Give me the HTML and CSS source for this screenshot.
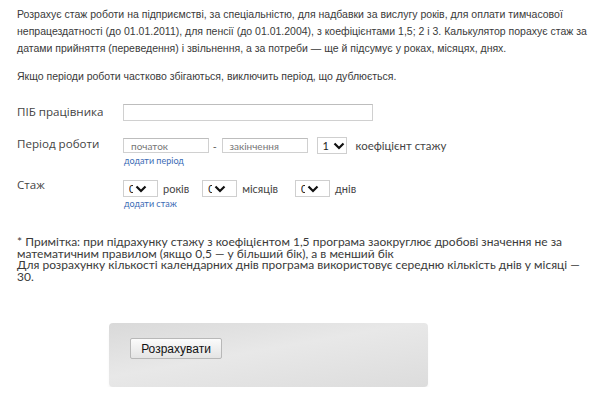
FILE: index.html
```html
<!DOCTYPE html>
<html lang="uk">
<head>
<meta charset="utf-8">
<link rel="stylesheet" href="styles.css">
</head>
<body>
<div class="page">
  <p class="intro">Розрахує стаж роботи на підприємстві, за спеціальністю, для надбавки за вислугу років, для оплати тимчасової непрацездатності (до 01.01.2011), для пенсії (до 01.01.2004), з коефіцієнтами 1,5; 2 і 3. Калькулятор порахує стаж за датами прийняття (переведення) і звільнення, а за потреби — ще й підсумує у роках, місяцях, днях.</p>
  <p class="intro second">Якщо періоди роботи частково збігаються, виключить період, що дублюється.</p>

  <div class="form">
    <div class="row row-name">
      <div class="label">ПІБ працівника</div>
      <div class="field"><div class="input wide"></div></div>
    </div>
    <div class="row row-period">
      <div class="label">Період роботи</div>
      <div class="field">
        <div class="line">
          <div class="input date">початок</div>
          <span class="dash">-</span>
          <div class="input date">закінчення</div>
          <div class="select coef"><span class="val">1</span><svg class="chev" viewBox="0 0 12 8" width="12" height="8"><path d="M1.5 1.5 L6 6 L10.5 1.5" fill="none" stroke="#111" stroke-width="2.2"/></svg></div>
          <span class="unit coef-unit">коефіцієнт стажу</span>
        </div>
        <a class="add">додати період</a>
      </div>
    </div>
    <div class="row row-stazh">
      <div class="label">Стаж</div>
      <div class="field">
        <div class="line">
          <div class="select num"><span class="val clip">0</span><svg class="chev" viewBox="0 0 12 8" width="12" height="8"><path d="M1.5 1.5 L6 6 L10.5 1.5" fill="none" stroke="#111" stroke-width="2.2"/></svg></div>
          <span class="unit u1">років</span>
          <div class="select num"><span class="val clip">0</span><svg class="chev" viewBox="0 0 12 8" width="12" height="8"><path d="M1.5 1.5 L6 6 L10.5 1.5" fill="none" stroke="#111" stroke-width="2.2"/></svg></div>
          <span class="unit u2">місяців</span>
          <div class="select num"><span class="val clip">0</span><svg class="chev" viewBox="0 0 12 8" width="12" height="8"><path d="M1.5 1.5 L6 6 L10.5 1.5" fill="none" stroke="#111" stroke-width="2.2"/></svg></div>
          <span class="unit">днів</span>
        </div>
        <a class="add">додати стаж</a>
      </div>
    </div>
  </div>

  <p class="note">* Примітка: при підрахунку стажу з коефіцієнтом 1,5 програма заокруглює дробові значення не за математичним правилом (якщо 0,5 — у більший бік), а в менший бік<br>Для розрахунку кількості календарних днів програма використовує середню кількість днів у місяці — 30.</p>

  <div class="panel">
    <button class="calc" type="button">Розрахувати</button>
  </div>
</div>
</body>
</html>
```

FILE: styles.css
```css
* { box-sizing: border-box; }
html, body { margin: 0; padding: 0; background: #fff; }
body { font-family: "Liberation Sans", Arial, sans-serif; color: #333; }
.page { padding: 6px 8px 0 17px; }

.intro {
  margin: 0;
  font-size: 10.5px;
  line-height: 17px;
  color: #3a3a3a;
}
.intro.second { margin-top: 11px; }

.form {
  margin-top: 19px;
  font-family: "Open Sans", "Lato", sans-serif;
  color: #444;
}
.row {
  display: grid;
  grid-template-columns: 106px 1fr;
  align-items: start;
}
.label { font-size: 11.6px; line-height: 16px; }
.row-name { height: 33px; }
.row-name .label { padding-top: 0; }
.row-period { height: 43px; }
.row-period .label { margin-top: -1px; }
.row-stazh .label { margin-top: -3px; }

.input {
  height: 17px;
  border: 1px solid #d0d0d0;
  border-top-color: #bdbdbd;
  background: #fff;
  font-family: "Lato", sans-serif;
  font-size: 10px;
  color: #777;
  padding: 2px 0 0 7px;
  line-height: 12px;
}
.input.wide { width: 250px; }
.input.date { width: 86px; height: 15px; padding-top: 1px; }

.line {
  display: flex;
  align-items: center;
  height: 17px;
}
.dash { margin: 0 5px 0 4px; font-size: 11px; color: #555; }
.select {
  display: flex;
  align-items: center;
  height: 17px;
  border: 1px solid #cfcfcf;
  background: #fff;
  padding-left: 5px;
  font-family: "Lato", sans-serif;
  font-size: 11px;
  color: #222;
}
.select .val { width: 8px; line-height: 12px; }
.select .val.clip { width: 4px; overflow: hidden; }
.select .chev { margin-left: 2px; }
.select.coef { width: 30px; margin-left: 9px; }
.select.num { width: 35px; }
.unit { font-family: "Lato", sans-serif; font-size: 11px; color: #444; margin-left: 5px; }
.coef-unit { margin-left: 9px; font-size: 11.4px; }
.u1 { margin-right: 13px; }
.u2 { margin-right: 17px; }

.add {
  display: block;
  margin-top: 1px;
  font-size: 9px;
  color: #3b6bb5;
  padding-left: 1px;
  font-family: "Lato", sans-serif;
}

.note {
  margin: 27px 0 0;
  font-family: "Lato", "Open Sans", sans-serif;
  font-size: 12px;
  line-height: 11.6px;
  color: #3a3a3a;
  width: 575px;
}

.panel {
  margin: 41px 0 0 92px;
  width: 319px;
  height: 64px;
  border-radius: 4px;
  background: linear-gradient(170deg, #d9d9d9 0%, #e8e8e8 45%, #dcdcdc 100%);
  box-shadow: 0 6px 5px -3px rgba(0,0,0,0.18);
  padding: 15px 0 0 21px;
}
.calc {
  display: block;
  width: 92px;
  height: 21px;
  margin: 0;
  padding: 0;
  border: 1px solid #b8b8b8;
  border-radius: 2px;
  background: linear-gradient(#fbfbfb, #e4e4e4);
  font-family: "Liberation Sans", Arial, sans-serif;
  font-size: 12px;
  color: #111;
}
```
